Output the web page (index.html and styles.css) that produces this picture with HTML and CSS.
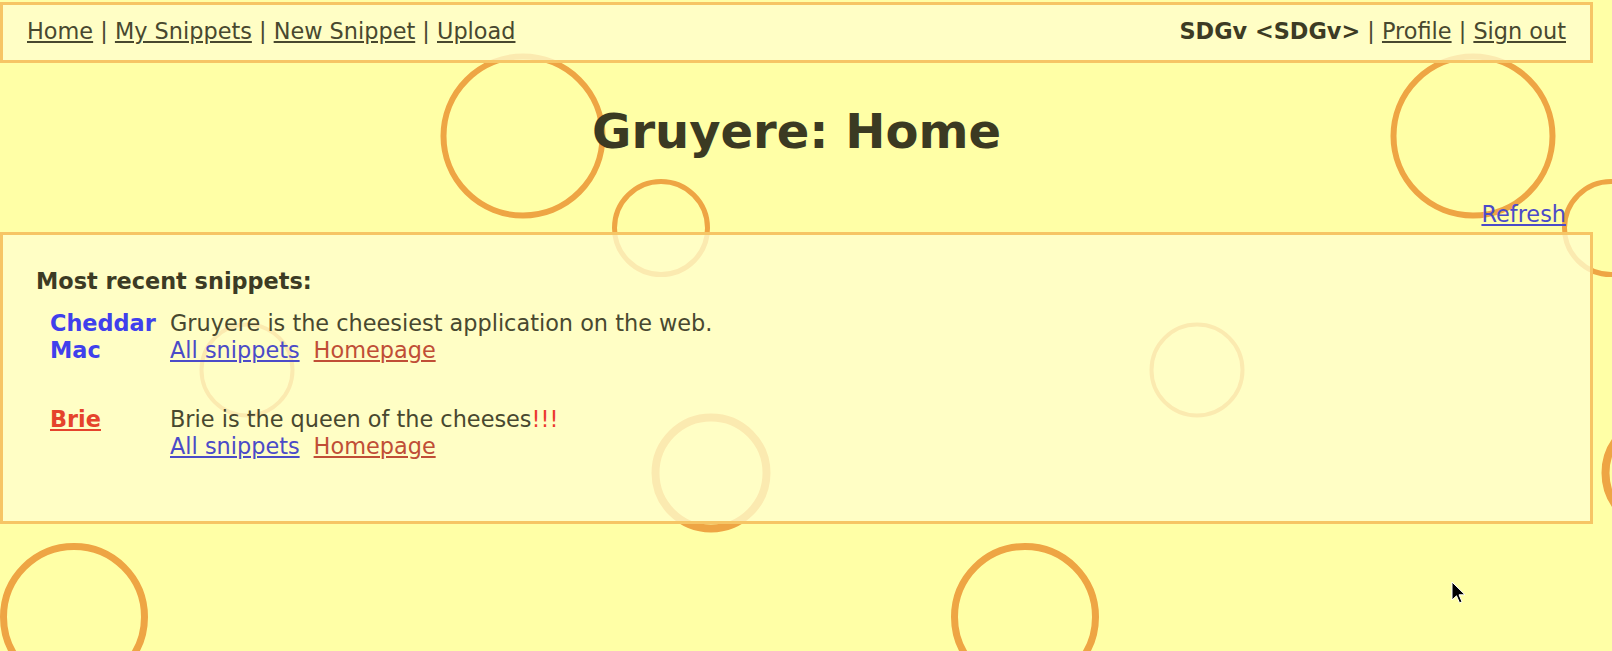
FILE: index.html
```html
<!DOCTYPE html>
<html lang="en">
<head>
<meta charset="utf-8">
<title>Gruyere: Home</title>
<link rel="stylesheet" href="styles.css">
</head>
<body>
<svg class="cheese" width="1612" height="651" viewBox="0 0 1612 651" aria-hidden="true">
  <g fill="none" stroke="#eea544">
    <circle cx="523" cy="136" r="79.5" stroke-width="6"/>
    <circle cx="1473" cy="136" r="79.5" stroke-width="6"/>
    <circle cx="661" cy="228" r="46.5" stroke-width="5"/>
    <circle cx="1611" cy="228" r="46.5" stroke-width="5"/>
    <circle cx="247" cy="370" r="45.5" stroke-width="4"/>
    <circle cx="1197" cy="370" r="45.5" stroke-width="4"/>
    <circle cx="711" cy="473" r="55.5" stroke-width="8"/>
    <circle cx="1661" cy="473" r="55.5" stroke-width="8"/>
    <circle cx="74" cy="617" r="70.5" stroke-width="7"/>
    <circle cx="1025" cy="617" r="70.5" stroke-width="7"/>
  </g>
</svg>
<div class="page">
  <div class="menu">
    <div class="menu-left"><a href="#">Home</a> | <a href="#">My Snippets</a> | <a href="#">New Snippet</a> | <a href="#">Upload</a></div>
    <div class="menu-right"><b>SDGv &lt;SDGv&gt;</b> | <a href="#">Profile</a> | <a href="#">Sign out</a></div>
  </div>
  <h1 class="title">Gruyere: Home</h1>
  <div class="refresh"><a href="#">Refresh</a></div>
  <div class="content">
    <div class="heading">Most recent snippets:</div>
    <div class="snippets">
      <div class="author author-blue">Cheddar Mac</div>
      <div class="snippet">
        <div>Gruyere is the cheesiest application on the web.</div>
        <div class="links"><a class="link-all" href="#">All snippets</a><a class="link-home" href="#">Homepage</a></div>
      </div>
      <div class="author"><a class="author-red" href="#">Brie</a></div>
      <div class="snippet">
        <div>Brie is the queen of the cheeses<span class="bang">!!!</span></div>
        <div class="links"><a class="link-all" href="#">All snippets</a><a class="link-home" href="#">Homepage</a></div>
      </div>
    </div>
  </div>
</div>
<svg class="cursor" width="16" height="24" viewBox="0 0 16 24" aria-hidden="true">
  <path d="M1 1 L1 19 L5.5 14.8 L8.5 21.8 L11 20.8 L8 13.8 L14 13.8 Z" fill="#000" stroke="#fff" stroke-width="1"/>
</svg>
</body>
</html>
```

FILE: styles.css
```css
html, body {
  margin: 0;
  padding: 0;
}

body {
  position: relative;
  width: 1612px;
  height: 651px;
  overflow: hidden;
  background: #ffffa6;
  font-family: "DejaVu Sans", "Noto Sans", sans-serif;
  font-size: 22.4px;
  color: #48482f;
}

.cheese {
  position: absolute;
  left: 0;
  top: 0;
  z-index: 0;
}

.page {
  position: relative;
  z-index: 1;
  margin-right: 19px;
  padding-top: 2px;
}

.menu {
  display: flex;
  justify-content: space-between;
  border: 3px solid #f6c565;
  background: rgba(255, 254, 206, 0.78);
  padding: 13px 24px 16px;
}

.menu a {
  color: inherit;
}

.menu-right b {
  color: #3c3b24;
}

.title {
  margin: 40px 0 42px;
  font-size: 48px;
  font-weight: bold;
  line-height: normal;
  text-align: center;
  color: #3b3a22;
}

.refresh {
  text-align: right;
  padding-right: 27px;
  margin-bottom: 5px;
}

.refresh a {
  color: #4b4bc8;
}

.content {
  border: 3px solid #f6c565;
  background: rgba(255, 254, 206, 0.78);
  padding: 33px 33px 61px;
}

.heading {
  font-weight: bold;
  color: #3c3b24;
  margin-bottom: 16px;
}

.snippets {
  display: grid;
  grid-template-columns: 120px 1fr;
  row-gap: 42px;
  margin-left: 14px;
  line-height: 27px;
}

.author {
  font-weight: bold;
}

.author-blue {
  color: #4040ec;
}

.author-red {
  color: #e5432c;
}

.links {
  display: flex;
  gap: 14px;
}

.link-all {
  color: #4b4bc8;
}

.link-home {
  color: #c04e36;
}

.bang {
  color: #ec3a2e;
}

.cursor {
  position: absolute;
  left: 1451px;
  top: 581px;
  z-index: 2;
}
```
